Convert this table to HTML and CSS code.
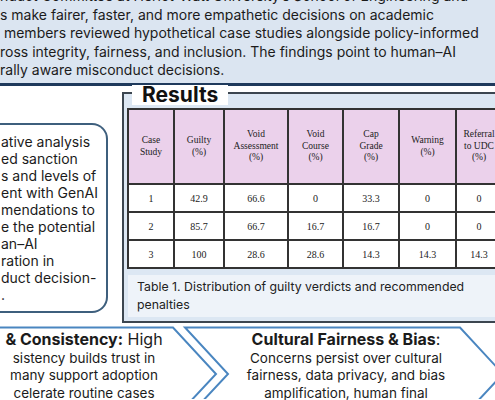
FILE: index.html
```html
<!DOCTYPE html>
<html lang="en">
<head>
    <meta charset="UTF-8">
    <meta name="viewport" content="width=device-width, initial-scale=1.0">
    <title>GenAI Misconduct Decisions</title>
    <link rel="stylesheet" href="styles.css">
</head>
<body>

    <!-- Intro text -->
    <div class="intro">
        <p class="intro-text">
            <span class="line">nduct Committee at Heriot-Watt University’s School of Engineering and</span>
            <span class="line">s make fairer, faster, and more empathetic decisions on academic</span>
            <span class="line">&nbsp;members reviewed hypothetical case studies alongside policy-informed</span>
            <span class="line">ross integrity, fairness, and inclusion. The findings point to human–AI</span>
            <span class="line">rally aware misconduct decisions.</span>
        </p>
    </div>

    <div class="main">

        <!-- Aim box -->
        <div class="aim">
            <div class="aim-box">
                <p>ative analysis<br>ed sanction<br>s and levels of<br>ent with GenAI<br>mendations to<br>e the potential<br>an–AI<br>ration in<br>duct decision-<br>.</p>
            </div>
        </div>

        <!-- Results -->
        <div class="results">
            <h2 class="results-title">Results</h2>
            <table class="results-table">
                <tr class="head-row">
                    <th class="col-case">Case<br>Study</th>
                    <th class="col-guilty">Guilty<br>(%)</th>
                    <th class="col-va">Void<br>Assessment<br>(%)</th>
                    <th class="col-vc">Void<br>Course<br>(%)</th>
                    <th class="col-cap">Cap<br>Grade<br>(%)</th>
                    <th class="col-warn">Warning<br>(%)</th>
                    <th class="col-udc">Referral<br>to UDC<br>(%)</th>
                </tr>
                <tr>
                    <td>1</td><td>42.9</td><td>66.6</td><td>0</td><td>33.3</td><td>0</td><td>0</td>
                </tr>
                <tr>
                    <td>2</td><td>85.7</td><td>66.7</td><td>16.7</td><td>16.7</td><td>0</td><td>0</td>
                </tr>
                <tr>
                    <td>3</td><td>100</td><td>28.6</td><td>28.6</td><td>14.3</td><td>14.3</td><td>14.3</td>
                </tr>
            </table>
            <p class="caption">Table 1. Distribution of guilty verdicts and recommended<br>penalties</p>
        </div>

    </div>

    <!-- Findings chevrons -->
    <div class="findings">
        <svg class="chevrons" width="495" height="76" viewBox="0 0 495 76">
            <polygon points="-10,4.5 173,4.5 216,51 173,97 -10,97" />
            <polygon points="185,4.5 460,4.5 503,51 460,97 185,97 228,51" />
        </svg>
        <div class="finding finding-left">
            <span class="finding-head"><b>&amp; Consistency:</b> High</span><br>sistency builds trust in<br>many support adoption<br>celerate routine cases
        </div>
        <div class="finding finding-right">
            <span class="finding-head"><b>Cultural Fairness &amp; Bias</b>:</span><br>Concerns persist over cultural<br>fairness, data privacy, and bias<br>amplification, human final
        </div>
    </div>

</body>
</html>
```

FILE: styles.css
```css
/* Page */

body {
    font-family: Inter, "Open Sans", sans-serif;
    background-color: #fff;
    color: #1b1b1b;
    margin: 0;
    padding: 0;
    width: 495px;
    height: 400px;
    overflow: hidden;
}

/* Intro */

.intro {
    background-color: #dbe5f1;
    height: 83px;
    overflow: hidden;
    border-bottom: 3px solid #1f3a5c;
}

.intro-text {
    margin: -13px 0 0 0;
    font-size: 14px;
    line-height: 18.6px;
    white-space: nowrap;
}

.intro-text .line {
    display: block;
}

/* Main row */

.main {
    display: flex;
    align-items: flex-start;
}

.aim {
    width: 122px;
    flex: none;
    padding-top: 37px;
}

.aim-box {
    margin-left: -20px;
    width: 128px;
    border: 2px solid #3e5f7d;
    border-left: none;
    border-radius: 0 16px 16px 0;
    padding: 8px 0 8px 21px;
    box-sizing: border-box;
}

.aim-box p {
    margin: 0;
    font-size: 14px;
    line-height: 17px;
    white-space: nowrap;
}

/* Results panel */

.results {
    position: relative;
    flex: none;
    width: 400px;
    margin-top: 6px;
    border: 2px solid #3c4650;
    background-color: #dce7f3;
    padding: 14px 0 4px 3px;
}

.results-title {
    position: absolute;
    top: -9px;
    left: 8px;
    margin: 0;
    padding: 0 10px;
    background-color: #fff;
    font-size: 21px;
    line-height: 20px;
    font-weight: 700;
    color: #111;
}

.results-table {
    border-collapse: collapse;
    background-color: #fff;
    font-family: "Liberation Serif", serif;
    color: #222;
}

.results-table th,
.results-table td {
    border: 2px solid #333;
    text-align: center;
    padding: 0;
}

.results-table th {
    background-color: #ebd1eb;
    font-weight: 400;
    font-size: 9.5px;
    line-height: 11.5px;
    height: 73px;
}

.results-table td {
    font-size: 10px;
    height: 26px;
}

.col-case { width: 44px; }
.col-guilty { width: 48px; }
.col-va { width: 62px; }
.col-vc { width: 53px; }
.col-cap { width: 54px; }
.col-warn { width: 55px; }
.col-udc { width: 44px; }

.caption {
    margin: 6px 0 0 1px;
    background-color: #eef3f9;
    padding: 3px 9px;
    font-size: 12.3px;
    line-height: 18px;
    color: #222;
}

/* Findings */

.findings {
    position: relative;
    display: flex;
    height: 76px;
    padding-top: 8px;
    box-sizing: border-box;
}

.chevrons {
    position: absolute;
    top: 0;
    left: 0;
}

.chevrons polygon {
    fill: none;
    stroke: #4a86c0;
    stroke-width: 2;
}

.finding {
    position: relative;
    font-size: 13.5px;
    line-height: 17.5px;
    text-align: center;
    white-space: nowrap;
}

.finding-head {
    font-size: 16px;
}

.finding-left {
    width: 168px;
}

.finding-right {
    width: 220px;
    margin-left: 68px;
}
```
